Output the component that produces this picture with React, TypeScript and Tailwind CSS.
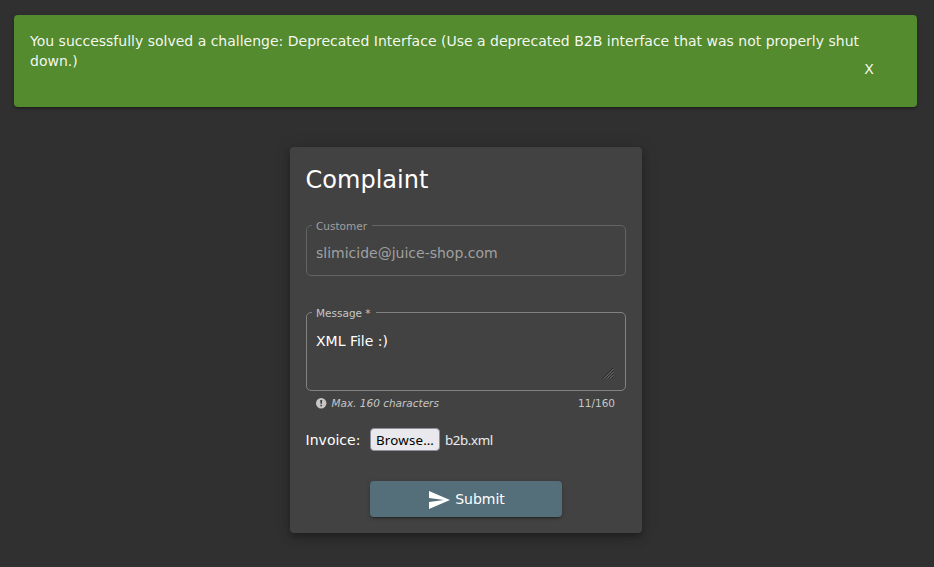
import React from 'react';

function Banner() {
  return (
    <div className="ml-[14px] mr-[17px] flex h-[92px] flex-col rounded-[4px] bg-[#558b2f] px-4 pt-4 leading-5 text-white/95 shadow-[0_3px_1px_-2px_rgba(0,0,0,0.2),0_2px_2px_0_rgba(0,0,0,0.14),0_1px_5px_0_rgba(0,0,0,0.12)]">
      <div className="flex">
        <p className="w-[834px]">
          You successfully solved a challenge: Deprecated Interface (Use a deprecated B2B interface that was not properly shut down.)
        </p>
        <button className="mt-7 h-5 w-[10px] shrink-0 text-center">X</button>
      </div>
    </div>
  );
}

function Field({
  label,
  className,
  children,
}: {
  label: string;
  className: string;
  children: React.ReactNode;
}) {
  return (
    <fieldset className={`w-full min-w-0 rounded-[5px] border ${className}`}>
      <legend className="ml-[5px] flex h-0 items-center whitespace-pre pr-[5.4px] pl-1 text-[10.5px] leading-none">
        <span className="pt-[2px]">{label}</span>
      </legend>
      {children}
    </fieldset>
  );
}

function InfoIcon() {
  return (
    <svg viewBox="0 0 12 12" className="mr-1 size-3" aria-hidden="true">
      <circle cx="6.2" cy="6.2" r="5.2" fill="#c6c6c6" />
      <path d="M5.2 2.9h2l-.25 3.9h-1.5zM5.4 7.7h1.6v1.5H5.4z" fill="#424242" />
    </svg>
  );
}

function ResizeGrip() {
  return (
    <svg viewBox="0 0 12 12" className="size-3" aria-hidden="true" strokeWidth="0.9">
      <path d="M.5 11.5 11.5.5M3.5 11.5l8-8M6.5 11.5l5-5M9.5 11.5l2-2" stroke="#242424" />
      <path d="M2 11.5 11.5 2M5 11.5 11.5 5M8 11.5 11.5 8" stroke="#777" />
    </svg>
  );
}

export default function App() {
  return (
    <div className="h-[567px] overflow-hidden bg-[#303030] pt-[15px] font-['DejaVu_Sans',sans-serif] text-[14px]">
      <Banner />
      <main className="mt-10 ml-[290px] flex h-[386px] w-[352px] flex-col rounded-[4px] bg-[#424242] px-4 pt-[17px] text-white shadow-[0_3px_5px_-1px_rgba(0,0,0,0.2),0_6px_10px_0_rgba(0,0,0,0.14),0_1px_18px_0_rgba(0,0,0,0.12)]">
        <h1 className="-ml-[0.4px] h-8 text-[24px] leading-8">Complaint</h1>
        <div className="mt-[29px]">
          <Field label="Customer" className="h-[51px] border-[#636363] text-[#a0a0a0]">
            <div className="pt-[17px] pl-[9px] leading-5">slimicide@juice-shop.com</div>
          </Field>
        </div>
        <div className="mt-9">
          <Field label="Message *" className="h-[79px] border-[#818181] text-[#c6c6c6]">
            <div className="flex h-[66px] justify-between pr-[11px] pl-[9px]">
              <span className="pt-[18px] leading-5 text-white">XML File :)</span>
              <span className="flex self-end">
                <ResizeGrip />
              </span>
            </div>
          </Field>
        </div>
        <div className="mt-[6px] flex h-3 items-center pr-[11px] pl-[9px] text-[10.5px] leading-3 text-[#c6c6c6]">
          <InfoIcon />
          <em className="pl-[0.4px]">Max. 160 characters</em>
          <span className="ml-auto">11/160</span>
        </div>
        <div className="mt-[19px] flex h-[23px] items-center">
          <span className="-ml-[0.4px] w-[64.4px] pt-[2px]">Invoice:</span>
          <button className="h-[23px] w-[70px] rounded-[4px] border border-[#8f8f9d] bg-[#e9e9ed] font-['Noto_Sans',sans-serif] text-[13.333px] leading-5 tracking-[0.2px] text-black">
            Browse…
          </button>
          <span className="ml-[5px] pt-[2px] font-['Noto_Sans',sans-serif] text-[13.333px] tracking-[-0.4px] text-white/90">b2b.xml</span>
        </div>
        <button className="mt-[30px] flex h-9 w-48 items-center justify-center gap-1 self-center rounded-[4px] bg-[#546e7a] shadow-[0_3px_1px_-2px_rgba(0,0,0,0.2),0_2px_2px_0_rgba(0,0,0,0.14),0_1px_5px_0_rgba(0,0,0,0.12)]">
          <svg viewBox="0 0 24 24" className="mt-px size-6" fill="white" aria-hidden="true">
            <path d="M2.01 21L23 12 2.01 3 2 10l15 2-15 2z" />
          </svg>
          <span>Submit</span>
        </button>
      </main>
    </div>
  );
}
